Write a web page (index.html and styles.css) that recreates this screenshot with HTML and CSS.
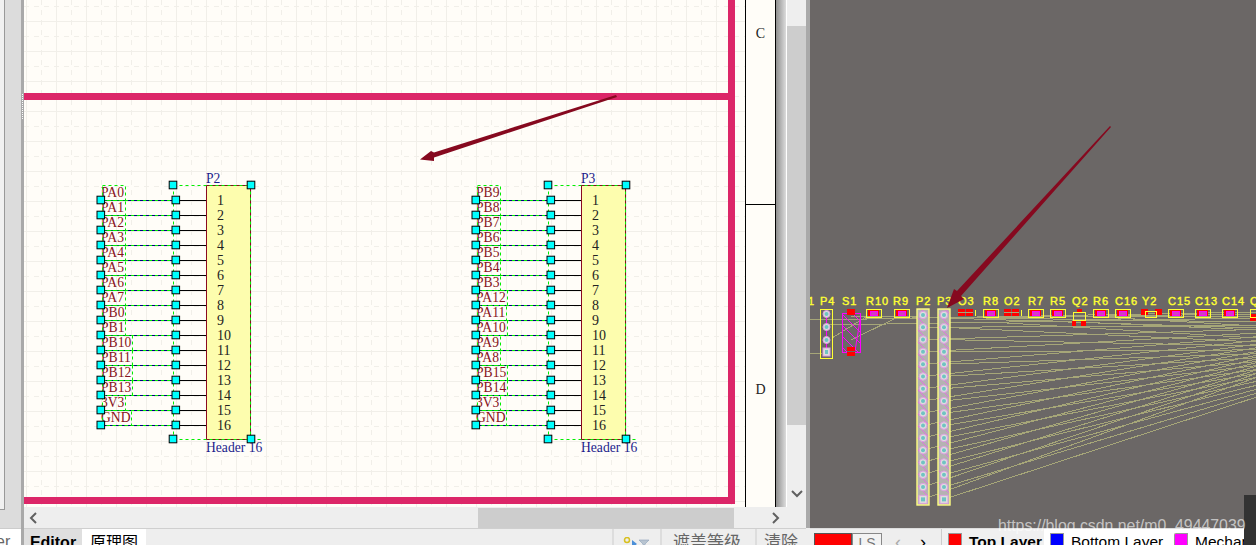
FILE: index.html
```html
<!DOCTYPE html>
<html lang="zh">
<head>
<meta charset="utf-8">
<title>原理图</title>
<link rel="stylesheet" href="styles.css">
</head>
<body>
<div class="app">
  <aside class="gutter">
    <div class="gutter-body"><div class="gutter-box"></div><div class="grip"></div></div>
    <div class="gutter-tab">er</div>
  </aside>
  <main class="left">
    <div class="doc">
      <svg id="sheet" class="sheet" viewBox="24 0 721 507" width="721" height="507"></svg>
      <div class="zones">
        <div class="zone zone-c">C</div>
        <div class="zone zone-d">D</div>
      </div>
      <div class="shade"></div>
      <div class="vscroll">
        <div class="vtrack-top"></div>
        <div class="vthumb"></div>
        <div class="varrow">
          <svg width="12" height="8" viewBox="0 0 12 8"><path class="chev" d="M1 1l5 5 5-5"/></svg>
        </div>
      </div>
    </div>
    <div class="hscroll">
      <div class="harrow"><svg width="8" height="12" viewBox="0 0 8 12"><path class="chev" d="M7 1L2 6l5 5"/></svg></div>
      <div class="hthumb"></div>
      <div class="harrow-r"><svg width="8" height="12" viewBox="0 0 8 12"><path class="chev" d="M1 1l5 5-5 5"/></svg></div>
    </div>
    <div class="tabs">
      <div class="tab tab-editor">Editor</div>
      <div class="tab tab-sch">原理图</div>
      <div class="tab-fill"></div>
      <div class="tool tool-filter">
        <svg width="28" height="10" viewBox="0 0 28 10">
          <circle class="f-ring" cx="4" cy="3" r="2.5"/>
          <path class="f-tri" d="M9 3l5 4-5 4z"/>
          <path class="f-funnel" d="M16 3h10l-4 4v4h-2V7z"/>
        </svg>
      </div>
      <div class="tool tool-mask">遮盖等级</div>
      <div class="tool tool-clear">清除</div>
    </div>
  </main>
  <div class="divider"></div>
  <section class="right">
    <svg id="pcb" class="pcb" viewBox="810 0 446 528" width="446" height="528"></svg>
    <div class="status">
      <div class="layer-set">
        <span class="cur-swatch"></span><span class="ls">LS</span>
        <span class="nav nav-prev">‹</span><span class="nav nav-next">›</span>
      </div>
      <div class="ltab ltab-top"><span class="sw sw-red"></span><b>Top Layer</b></div>
      <div class="ltab ltab-bot"><span class="sw sw-blue"></span>Bottom Layer</div>
      <div class="ltab ltab-mech"><span class="sw sw-mag"></span>Mechan</div>
    </div>
    <div class="dark-corner"></div>
    <div class="watermark">https://blog.csdn.net/m0_49447039</div>
  </section>
</div>
<script src="script.js"></script>
</body>
</html>
```
FILE: styles.css
```css
* { box-sizing: border-box; }
html, body { margin: 0; padding: 0; width: 1256px; height: 545px; overflow: hidden; background: #eeeeee; }
body { font-family: "Liberation Sans", "Noto Sans CJK SC", sans-serif; }
svg { display: block; }

.app { display: flex; width: 1256px; height: 545px; }

/* left gutter */
.gutter { width: 24px; display: flex; flex-direction: column; border-right: 3px solid #a9a9a9; position: relative; }
.gutter-body { height: 528px; background: #dcdcdc; position: relative; }
.gutter-box { width: 5px; height: 510px; background: #f1f1f1; border-right: 1px solid #999; border-bottom: 1px solid #999; }
.grip { position: absolute; left: 22px; top: 94px; width: 1px; height: 25px; border-left: 1px dotted #fff; }
.gutter-tab { height: 17px; background: #fff; color: #666; font-size: 16px; line-height: 20px; padding-top: 3px; margin-left: -4px; border-top: 1px solid #ccc; overflow: hidden; white-space: nowrap; }

/* main document */
.left { width: 782px; display: flex; flex-direction: column; }
.doc { display: flex; height: 507px; }
.sheet { background: #fffdf8; flex: none; }
.zones { width: 31px; background: #fffdf8; border-left: 1px solid #000; border-right: 1px solid #000; display: flex; flex-direction: column; font: 14px "Liberation Serif", serif; color: #222; text-align: center; }
.zone-c { height: 205px; padding-top: 26px; border-bottom: 1px solid #000; }
.zone-d { flex: 1; padding-top: 177px; }
.shade { width: 10px; background: linear-gradient(90deg, #8f8f8f, #dcdcdc); }
.vscroll { width: 20px; border-left: 1px solid #fff; background: #eeeeee; display: flex; flex-direction: column; }
.vtrack-top { height: 26px; }
.vthumb { height: 399px; background: #cdcdcd; }
.varrow { margin-top: 65px; display: flex; justify-content: center; }
.chev { fill: none; stroke: #606060; stroke-width: 2; }

.hscroll { height: 21px; display: flex; align-items: center; background: #eeeeee; }
.harrow { width: 454px; padding-left: 5px; }
.hthumb { width: 256px; height: 20px; background: #cdcdcd; }
.harrow-r { padding-left: 38px; }

.tabs { height: 17px; display: flex; border-top: 1px solid #cfcfcf; overflow: hidden; background: #eeeeee; }
.tab { font-size: 16px; line-height: 20px; padding-top: 4px; color: #000; white-space: nowrap; text-align: center; height: 30px; }
.tab-editor { width: 58px; font-weight: 700; background: #dfdfdf; }
.tab-sch { width: 64px; background: #fff; }
.tab-fill { width: 466px; }
.tool { border-left: 2px solid #dddddd; height: 30px; font-size: 17px; line-height: 20px; padding-top: 4px; color: #666; white-space: nowrap; }
.tool-filter { width: 48px; padding: 8px 0 0 9px; }
.tool-mask { width: 95px; padding-left: 11px; }
.tool-clear { width: 51px; padding-left: 7px; }
.f-ring { fill: none; stroke: #d8c020; stroke-width: 1.5; }
.f-tri { fill: #4b8fd8; }
.f-funnel { fill: #b8c4d0; stroke: #8aa0b8; stroke-width: .6; }

.divider { width: 4px; height: 528px; background: #a9a9a9; }

/* pcb */
.right { width: 446px; position: relative; }
.pcb { background: #6b6766; }
.status { height: 17px; display: flex; background: #eeeeee; border-top: 1px solid #dddddd; overflow: hidden; white-space: nowrap; }
.layer-set { width: 131px; display: flex; align-items: flex-start; padding: 4px 0 0 4px; }
.cur-swatch { width: 38px; height: 16px; background: #ff0000; border: 1px solid #555; border-bottom: 0; flex: none; }
.ls { width: 30px; height: 16px; border: 1px solid #888; border-bottom: 0; background: #f3f3f3; color: #777; font-size: 14px; text-align: center; line-height: 18px; flex: none; }
.nav { font-size: 18px; line-height: 14px; padding-top: 2px; flex: none; }
.nav-prev { margin-left: 13px; color: #aaa; }
.nav-next { margin-left: 19px; color: #000; }
.ltab { font-size: 15.5px; line-height: 20px; padding: 3px 0 0 6px; display: flex; gap: 7px; color: #000; height: 30px; }
.ltab-top { width: 103px; background: #f0f0f0; border-left: 1px solid #ccc; }
.ltab-bot { width: 124px; background: #fff; }
.ltab-mech { width: 88px; background: #fff; }
.sw { width: 14px; height: 16px; border: 1px solid #999; flex: none; margin-top: 1px; }
.sw-red { background: #ff0000; }
.sw-blue { background: #0000ff; }
.sw-mag { background: #ff00ff; }
.dark-corner { position: absolute; right: 0; top: 495px; width: 12px; height: 50px; background: #333333; }
.watermark { position: absolute; left: 188px; top: 517px; font-size: 15.85px; line-height: 18px; color: rgba(255, 255, 255, .62); white-space: nowrap; }

/* schematic */
.g-major { stroke: #f1efe9; stroke-width: 1; }
.g-minor { stroke: #f1efe9; stroke-width: 1; stroke-dasharray: 5 5; }
.frame { fill: #dc2668; }
.arrow { fill: #86091f; }
.body { fill: #fdfdae; stroke: #8a0a20; stroke-width: 1; }
.pin { stroke: #000; stroke-width: 1; }
.wire { stroke: #000080; stroke-width: 1; }
.sel { stroke: #00ee00; stroke-width: 1; stroke-dasharray: 3 3; fill: none; }
.handle { fill: #00ffff; stroke: #000; stroke-width: 1; }
.pinno { font: 14px "Liberation Serif", serif; fill: #222; }
.netlabel { font: 13.6px "Liberation Serif", serif; fill: #861222; }
.refdes { font: 13.6px "Liberation Serif", serif; fill: #1c1c8c; }

/* pcb drawing */
.rat { stroke: #a6a678; stroke-width: 1; }
.pcb-label { font: 11px "Liberation Sans", sans-serif; letter-spacing: 1px; fill: #ffff33; stroke: #ffff33; stroke-width: .4; }
.col { stroke: #ffff80; stroke-width: 1.4; }
.pad-o { fill: #dedede; stroke: #dba0e0; stroke-width: 1; }
.pad-i { fill: #6fc3c3; }
.yl { fill: none; stroke: #ffff33; stroke-width: 1; }
.mg { fill: #d040c0; stroke: #ff00ff; stroke-width: 1; }
.rd { fill: #ff0000; }
.mgline { stroke: #ff00ff; stroke-width: 1; }
.mgbox { fill: none; stroke: #ff00ff; stroke-width: 1; }
.hatch-line { stroke: #e070e0; stroke-width: 1; }
```
FILE: script.js
```js
const NS = 'http://www.w3.org/2000/svg';
function el(parent, tag, cls, attrs, text) {
  const e = document.createElementNS(NS, tag);
  if (cls) e.setAttribute('class', cls);
  for (const k in attrs) e.setAttribute(k, attrs[k]);
  if (text !== undefined) e.textContent = text;
  parent.appendChild(e);
  return e;
}
const line = (p, c, x1, y1, x2, y2, extra) => el(p, 'line', c, Object.assign({ x1, y1, x2, y2 }, extra || {}));

/* ---------- schematic sheet ---------- */
const sheet = document.getElementById('sheet');
for (let x = 26.5; x < 745; x += 15) {
  const major = Math.round((x - 26.5) / 15) % 2 === 0;
  line(sheet, major ? 'g-major' : 'g-minor', x, 0, x, 507);
}
for (let y = 6.5; y < 507; y += 15) {
  const major = Math.round((y - 6.5) / 15) % 2 === 1;
  line(sheet, major ? 'g-major' : 'g-minor', 24, y, 745, y);
}
el(sheet, 'rect', 'frame', { x: 24, y: 93, width: 711, height: 7 });
el(sheet, 'rect', 'frame', { x: 728, y: 0, width: 7, height: 504 });
el(sheet, 'rect', 'frame', { x: 24, y: 497, width: 711, height: 7 });
el(sheet, 'polygon', 'arrow', { points: '616,95 434,152.5 431,151 420,159.5 434,161 434,157.5 617,97' });

function symbol(dx, title, labels) {
  el(sheet, 'rect', 'body', { x: 206.5 + dx, y: 185.5, width: 44, height: 254 });
  el(sheet, 'text', 'refdes', { x: 206 + dx, y: 183 }, title);
  el(sheet, 'text', 'refdes', { x: 206 + dx, y: 452 }, 'Header 16');
  labels.forEach((name, k) => {
    const y = 200.5 + k * 15;
    line(sheet, 'pin', 176 + dx, y, 206 + dx, y);
    line(sheet, 'wire', 101 + dx, y, 176 + dx, y);
    line(sheet, 'sel', 101 + dx, y, 176 + dx, y);
    const t = el(sheet, 'text', 'netlabel', { x: 101 + dx, y: y - 4 }, name);
    const w = t.getComputedTextLength();
    el(sheet, 'rect', 'sel', { x: 102.5 + dx, y: y - 15, width: Math.round(w), height: 15 });
    el(sheet, 'text', 'pinno', { x: 217 + dx, y: y + 4 }, String(k + 1));
  });
  line(sheet, 'sel', 173.5 + dx, 185.5, 173.5 + dx, 439.5);
  line(sheet, 'sel', 173.5 + dx, 185.5, 250.5 + dx, 185.5);
  line(sheet, 'sel', 173.5 + dx, 439.5, 262 + dx, 439.5);
  line(sheet, 'sel', 250.5 + dx, 185.5, 250.5 + dx, 439.5);
  labels.forEach((name, k) => {
    const y = 200 + k * 15;
    el(sheet, 'rect', 'handle', { x: 97 + dx, y: y - 3.8, width: 7.6, height: 7.6 });
    el(sheet, 'rect', 'handle', { x: 172 + dx, y: y - 3.8, width: 7.6, height: 7.6 });
  });
  [[173, 185], [251, 185], [173, 439], [251, 439]].forEach(([x, y]) => {
    el(sheet, 'rect', 'handle', { x: x - 3.8 + dx, y: y - 3.8, width: 7.6, height: 7.6 });
  });
}
symbol(0, 'P2', ['PA0','PA1','PA2','PA3','PA4','PA5','PA6','PA7','PB0','PB1','PB10','PB11','PB12','PB13','3V3','GND']);
symbol(375, 'P3', ['PB9','PB8','PB7','PB6','PB5','PB4','PB3','PA12','PA11','PA10','PA9','PA8','PB15','PB14','3V3','GND']);

/* ---------- pcb ---------- */
const pcb = document.getElementById('pcb');
const defs = el(pcb, 'defs', '', {});
const pat = el(defs, 'pattern', '', { id: 'hatch', width: 12, height: 12, patternUnits: 'userSpaceOnUse' });
line(pat, 'hatch-line', 0, 0, 12, 12);
const pat2 = el(defs, 'pattern', '', { id: 'hatch-fine', width: 11, height: 11, patternUnits: 'userSpaceOnUse' });
line(pat2, 'mgline', 0, 0, 11, 11);

const rats = el(pcb, 'g', '', { 'shape-rendering': 'crispEdges' });
const padY = k => 315 + k * 12.29;
for (let k = 1; k < 16; k++) {
  line(rats, 'rat', 923, padY(k), 1256, 322 + k * 3.7);
  line(rats, 'rat', 944, padY(k), 1256, 338 + k * 3.95);
}
[[810, 320, 1256, 312], [826, 325, 1256, 318], [850, 316, 1256, 322], [880, 316, 1256, 328],
 [960, 318, 1256, 314], [990, 322, 1256, 338], [1030, 320, 1256, 330], [1100, 317, 1256, 326],
 [810, 353, 822, 353], [832, 338, 866, 317], [851, 340, 900, 316], [860, 320, 880, 317], [1060, 317, 1256, 316]
].forEach(a => line(rats, 'rat', a[0], a[1], a[2], a[3]));

[['1',808],['P4',820],['S1',842],['R10',866],['R9',893],['P2',916],['P3',937],['O3',958],['R8',983],['O2',1004],
 ['R7',1028],['R5',1050],['Q2',1072],['R6',1093],['C16',1115],['Y2',1142],['C15',1168],['C13',1195],['C14',1222],['Q',1250]]
 .forEach(([t, x]) => el(pcb, 'text', 'pcb-label', { x, y: 305 }, t));

/* P4 */
el(pcb, 'rect', 'yl', { x: 820.5, y: 309.5, width: 12, height: 49 });
line(pcb, 'mgline', 826.5, 314, 826.5, 352);
[314, 327, 340].forEach(y => {
  el(pcb, 'circle', 'pad-o', { cx: 826.5, cy: y, r: 3.5 });
  el(pcb, 'circle', 'pad-i', { cx: 826.5, cy: y, r: 2 });
});
el(pcb, 'rect', 'pad-o', { x: 823, y: 348, width: 7, height: 8 });
el(pcb, 'rect', 'pad-i', { x: 825, y: 350, width: 3, height: 4 });

/* S1 */
el(pcb, 'rect', 'mgbox', { x: 842.5, y: 313.5, width: 18, height: 39 });
el(pcb, 'rect', '', { x: 842.5, y: 313.5, width: 18, height: 39, fill: 'url(#hatch-fine)' });
line(pcb, 'mgline', 860, 320, 855, 351);
el(pcb, 'rect', 'rd', { x: 847, y: 309, width: 8, height: 6 });
el(pcb, 'rect', 'rd', { x: 847, y: 347, width: 8, height: 4 });
el(pcb, 'rect', 'rd', { x: 847, y: 352, width: 8, height: 4 });

/* two-pad parts */
[866, 894, 983, 1028, 1050, 1093, 1115, 1168, 1195, 1222].forEach(x => {
  el(pcb, 'rect', 'rd', { x: x + 2, y: 310, width: 11, height: 6 });
  el(pcb, 'rect', 'mg', { x: x + 4.5, y: 311.5, width: 7, height: 4 });
  el(pcb, 'rect', 'yl', { x: x + 0.5, y: 309.5, width: 15, height: 8 });
});
[958, 1004].forEach(x => {
  el(pcb, 'rect', 'rd', { x, y: 309, width: 7, height: 7 });
  el(pcb, 'rect', 'rd', { x: x + 8, y: 309, width: 7, height: 7 });
  line(pcb, 'yl', x + 17.5, 310, x + 17.5, 316);
  line(pcb, 'rat', x, 312.5, x + 15, 312.5);
});
/* Q2 */
el(pcb, 'rect', 'rd', { x: 1077, y: 309, width: 5, height: 4 });
el(pcb, 'rect', 'yl', { x: 1073.5, y: 312.5, width: 12, height: 8 });
el(pcb, 'rect', 'rd', { x: 1072, y: 321, width: 4, height: 5 });
el(pcb, 'rect', 'rd', { x: 1081, y: 321, width: 5, height: 5 });
/* Y2 */
el(pcb, 'rect', 'rd', { x: 1141, y: 309, width: 7, height: 6 });
el(pcb, 'rect', 'rd', { x: 1155, y: 309, width: 7, height: 6 });
el(pcb, 'rect', 'yl', { x: 1145.5, y: 311.5, width: 11, height: 6 });
/* Q right edge */
el(pcb, 'rect', 'rd', { x: 1250, y: 314, width: 6, height: 7 });
el(pcb, 'rect', 'yl', { x: 1250.5, y: 309.5, width: 8, height: 8 });

/* header columns */
[923, 944].forEach(cx => {
  el(pcb, 'rect', '', { x: cx - 6, y: 309, width: 12, height: 196, fill: '#b5b2b2' });
  el(pcb, 'rect', 'col', { x: cx - 6, y: 309, width: 12, height: 196, fill: 'url(#hatch)' });
  for (let k = 0; k < 15; k++) {
    el(pcb, 'circle', 'pad-o', { cx, cy: padY(k), r: 3.8 });
    el(pcb, 'circle', 'pad-i', { cx, cy: padY(k), r: 2 });
  }
  el(pcb, 'rect', 'pad-o', { x: cx - 4, y: padY(15) - 4, width: 8, height: 8 });
  el(pcb, 'rect', 'pad-i', { x: cx - 2, y: padY(15) - 2, width: 4, height: 4 });
});

el(pcb, 'polygon', 'arrow', { points: '1111,127 1110,126 957,291 954,289 947,308 964,299 961,296' });
```
